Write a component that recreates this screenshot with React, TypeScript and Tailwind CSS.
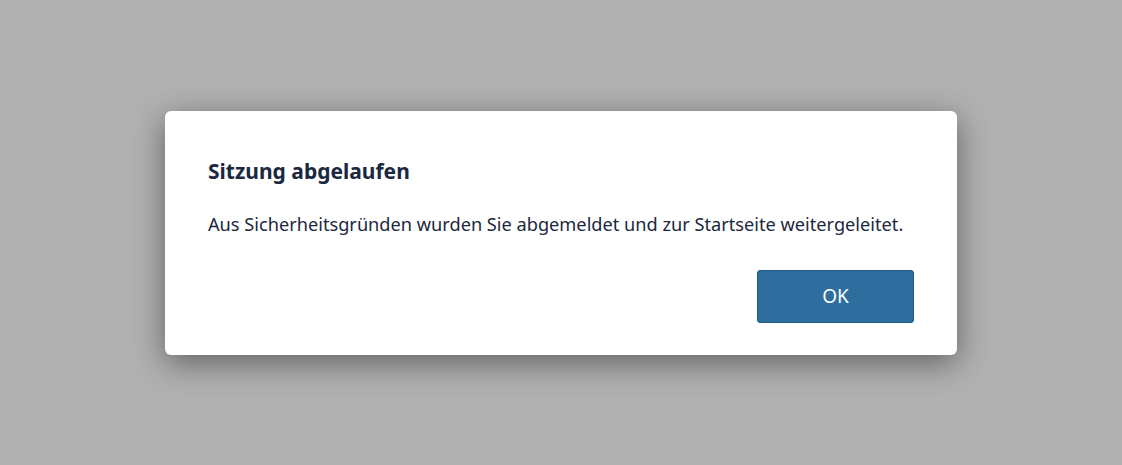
export default function App() {
	return (
		<div
			className="flex h-[465px] w-full items-center justify-center bg-[#b1b1b1]"
			style={{ fontFamily: '"Noto Sans", "Open Sans", sans-serif' }}
		>
			<div
				role="dialog"
				className="w-[792px] rounded-[6px] bg-white px-[43px] pt-[46px] pb-[32px] text-[#1b2840] shadow-[0_8px_32px_rgba(0,0,0,0.45)]"
			>
				<h2 className="text-[21px] leading-[28px] font-bold">Sitzung abgelaufen</h2>
				<p className="mt-[26px] text-[18.2px] leading-[26px]">
					Aus Sicherheitsgründen wurden Sie abgemeldet und zur Startseite weitergeleitet.
				</p>
				<div className="mt-[33px] flex justify-end">
					<button
						type="button"
						className="h-[53px] w-[157px] rounded-[3px] border border-[#1f5b89] bg-[#2d6e9e] text-[19px] text-white"
					>
						OK
					</button>
				</div>
			</div>
		</div>
	);
}
